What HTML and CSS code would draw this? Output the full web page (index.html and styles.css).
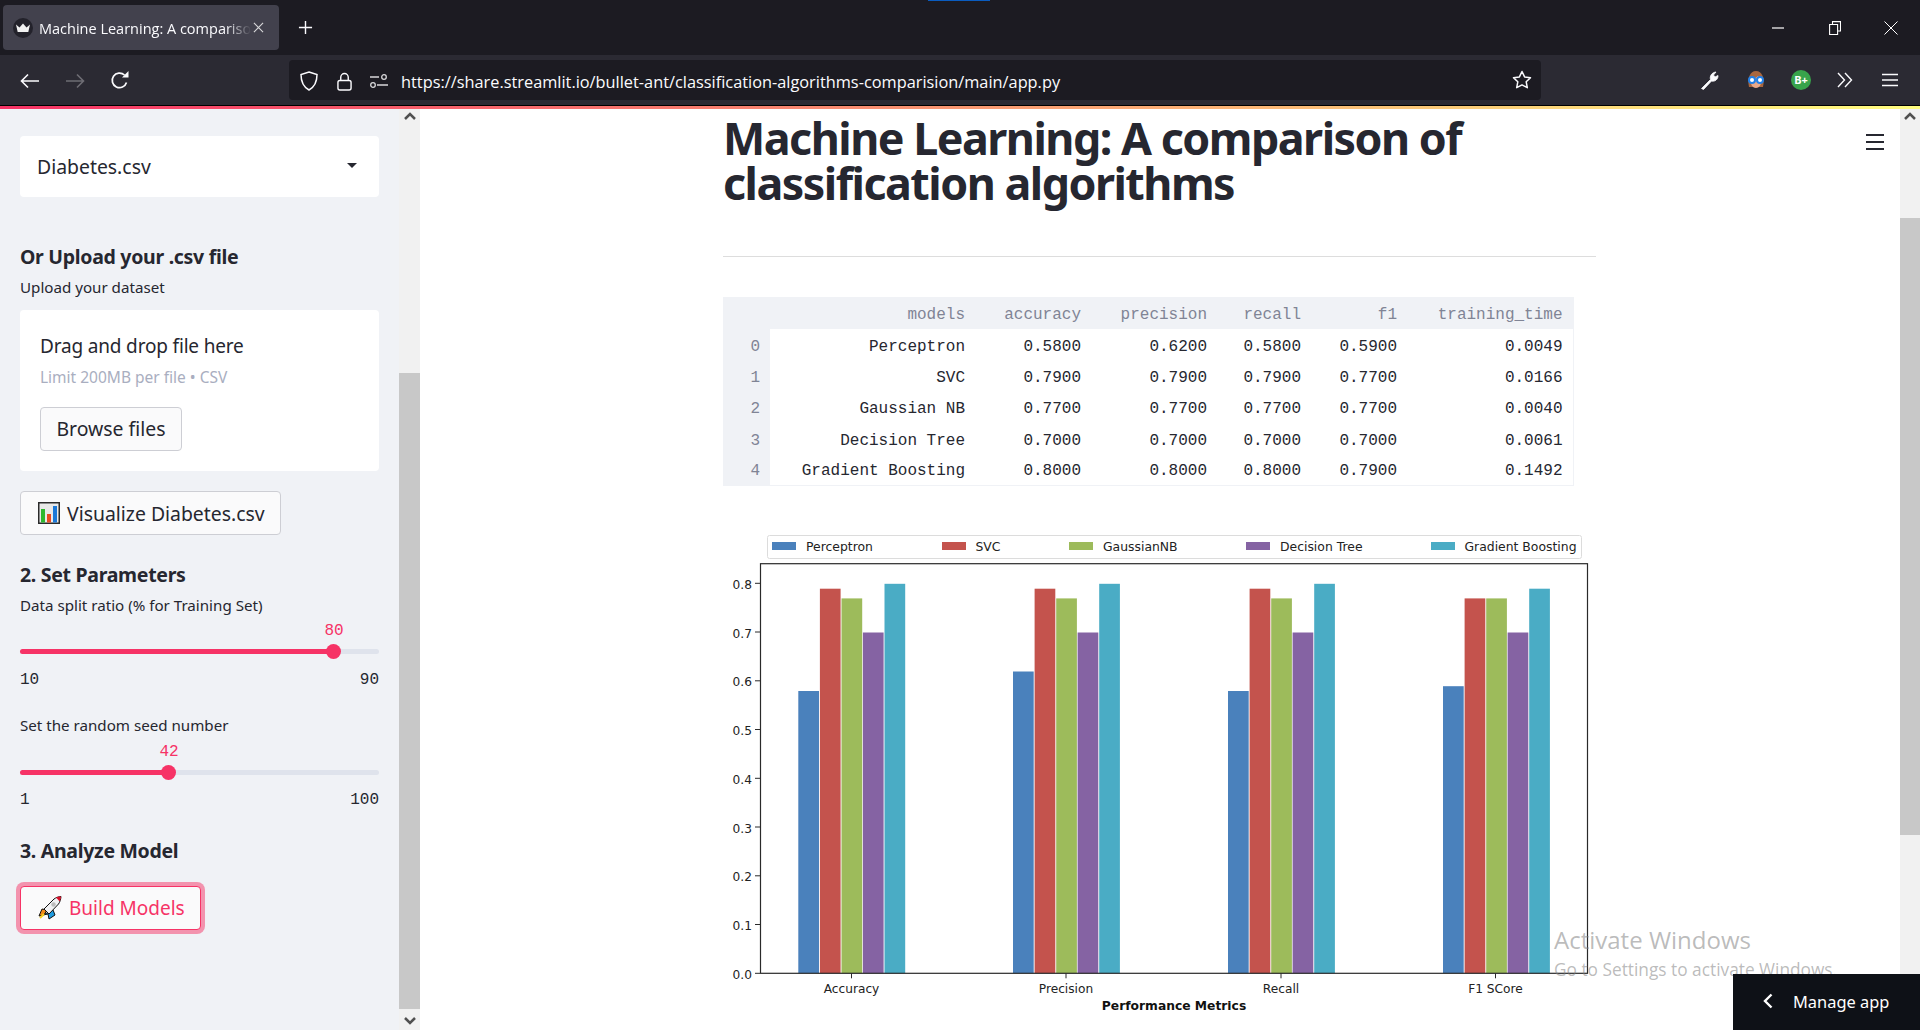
FILE: index.html
```html
<!DOCTYPE html>
<html lang="en">
<head>
<meta charset="utf-8">
<title>Machine Learning: A comparison of classification algorithms</title>
<link rel="stylesheet" href="styles.css">
</head>
<body>
<div class="loadbar"></div>
<header class="tabbar">
  <div class="tab">
    <svg class="favicon" viewBox="0 0 20 20"><circle cx="10" cy="10" r="10" fill="#23222b"/><path d="M3 6.500l3.500 3L10 5.500l3.500 4L17 6.500 15.300 14H4.700z" fill="#f2f2f2"/></svg>
    <span class="tab-title">Machine Learning: A comparison of classification</span>
    <svg class="tab-close" viewBox="0 0 12 12"><path d="M1 1l10 10M11 1L1 11" stroke="#d8d8da" stroke-width="1.200" fill="none"/></svg>
  </div>
  <svg class="newtab" viewBox="0 0 16 16"><path d="M8 1v14M1 8h14" stroke="#fbfbfe" stroke-width="1.500" fill="none"/></svg>
  <div class="winctl">
    <svg class="win-min" viewBox="0 0 12 2"><path d="M0 1h12" stroke="#fff" stroke-width="1.200"/></svg>
    <svg class="win-max" viewBox="0 0 12 14"><path d="M3.500 3V.6h8v9.400H9M.6 3.500h8v10h-8z" stroke="#fff" stroke-width="1.100" fill="none"/></svg>
    <svg class="win-close" viewBox="0 0 14 14"><path d="M.5.5l13 13M13.500.5l-13 13" stroke="#fff" stroke-width="1"/></svg>
  </div>
</header>
<nav class="navbar">
  <svg class="nav-ic nav-back" viewBox="0 0 20 16"><path d="M19 8H2M8 1.500L1.500 8 8 14.500" stroke="#fbfbfe" stroke-width="1.600" fill="none"/></svg>
  <svg class="nav-ic nav-fwd" viewBox="0 0 20 16"><path d="M1 8h17M12 1.500L18.500 8 12 14.500" stroke="#6e6d74" stroke-width="1.600" fill="none"/></svg>
  <svg class="nav-ic nav-reload" viewBox="0 0 20 20"><path d="M16.500 11.500A7.300 7.300 0 1 1 14.500 4" stroke="#fbfbfe" stroke-width="1.700" fill="none"/><path d="M12 6.500h6.500V0z" fill="#fbfbfe"/></svg>
  <div class="urlbar">
    <svg class="url-shield" viewBox="0 0 18 20"><path d="M9 1l8 2.500c0 8-2.500 12.500-8 15.500C3.500 16 1 11.500 1 3.500z" stroke="#fbfbfe" stroke-width="1.500" fill="none"/></svg>
    <svg class="url-lock" viewBox="0 0 16 20"><path d="M4 9V5.500a4 4 0 0 1 8 0V9" stroke="#fbfbfe" stroke-width="1.500" fill="none"/><rect x="1" y="9" width="14" height="10" rx="2" stroke="#fbfbfe" stroke-width="1.500" fill="none"/></svg>
    <svg class="url-tune" viewBox="0 0 18 14"><path d="M0 3h9M7 11h11" stroke="#d8d8da" stroke-width="1.500"/><circle cx="14" cy="3" r="2.300" stroke="#d8d8da" stroke-width="1.300" fill="none"/><circle cx="3" cy="11" r="2.300" stroke="#d8d8da" stroke-width="1.300" fill="none"/></svg>
    <span class="url-text">https://share.streamlit.io/bullet-ant/classification-algorithms-comparision/main/app.py</span>
    <svg class="url-star" viewBox="0 0 20 20"><path d="M10 1.500l2.600 5.400 5.900.8-4.300 4.100 1.100 5.900L10 14.900l-5.300 2.800 1.100-5.900L1.500 7.700l5.900-.8z" stroke="#fbfbfe" stroke-width="1.500" fill="none" stroke-linejoin="round"/></svg>
  </div>
  <div class="tools">
    <svg class="tool-wrench" viewBox="0 0 20 20"><path d="M1.500 18.500L10.500 9.500c-1-3 1-7 5.500-7.500l-2.500 3 1.500 2 3-1.500c.3 4-3.500 6.500-6.500 5.500l-8 8.500z" fill="#fbfbfe" stroke="#fbfbfe" stroke-width=".8" stroke-linejoin="round"/></svg>
    <svg class="tool-avatar" viewBox="0 0 20 20"><path d="M3 17C1 8 4 1 10 1s9 7 7 16z" fill="#a9673f"/><path d="M4.500 10c0 5 2.500 8 5.500 8s5.500-3 5.500-8c-2-1-3-3-3.500-4-2 2-5 3-7.500 4z" fill="#eaa98a"/><circle cx="6" cy="10" r="3" fill="#fff" stroke="#2280e8" stroke-width="2"/><circle cx="14" cy="10" r="3" fill="#fff" stroke="#2280e8" stroke-width="2"/></svg>
    <span class="tool-grade">B+</span>
    <svg class="tool-more" viewBox="0 0 16 16"><path d="M1 1l6.500 7L1 15M8 1l6.500 7L8 15" stroke="#fbfbfe" stroke-width="1.400" fill="none"/></svg>
    <svg class="tool-menu" viewBox="0 0 16 14"><path d="M0 1.500h16M0 7h16M0 12.500h16" stroke="#fbfbfe" stroke-width="1.600"/></svg>
  </div>
</nav>
<div class="accent"></div>
<div class="app">
  <aside class="sidebar">
    <div class="select"><span>Diabetes.csv</span><i class="caret"></i></div>
    <h3 class="side-head head-upload">Or Upload your .csv file</h3>
    <p class="side-label label-upload">Upload your dataset</p>
    <div class="uploader">
      <div class="drop-title">Drag and drop file here</div>
      <div class="drop-limit">Limit 200MB per file • CSV</div>
      <button class="btn btn-browse">Browse files</button>
    </div>
    <button class="btn btn-visual">
      <svg class="emoji" viewBox="0 0 22 22"><rect width="22" height="22" fill="#2b2b2b"/><rect x="1.500" y="1.500" width="19" height="19" fill="#e9e9e9"/><rect x="3" y="7" width="4" height="13.500" fill="#2eb82e"/><rect x="9" y="12" width="4" height="8.500" fill="#ea4a22"/><rect x="15" y="4" width="4" height="16.500" fill="#1b78d8"/></svg>
      Visualize Diabetes.csv
    </button>
    <h3 class="side-head head-params">2. Set Parameters</h3>
    <p class="side-label label-split">Data split ratio (% for Training Set)</p>
    <div class="slider slider-split">
      <div class="slider-value">80</div>
      <div class="track"><div class="fill"><i class="thumb"></i></div></div>
      <div class="slider-ends"><span>10</span><span>90</span></div>
    </div>
    <p class="side-label label-seed">Set the random seed number</p>
    <div class="slider slider-seed">
      <div class="slider-value">42</div>
      <div class="track"><div class="fill"><i class="thumb"></i></div></div>
      <div class="slider-ends"><span>1</span><span>100</span></div>
    </div>
    <h3 class="side-head head-model">3. Analyze Model</h3>
    <button class="btn btn-build">
      <svg class="emoji emoji-rocket" viewBox="0 0 24 24"><path d="M1 20l3-7 5 1-3 5z" fill="#f08a1a" stroke="#111" stroke-width="1"/><path d="M5 19l5-1 1 5 6-4-2-5z" fill="#1e9be0" stroke="#111" stroke-width="1"/><path d="M6 13L16 3c2-1.500 5-2.500 7-2.500-.3 3-1 5.500-2.500 7.500L11 18z" fill="#f2f2f4" stroke="#111" stroke-width="1"/><path d="M18 1.500c1.500-.7 3.500-1 5-1-.2 2-.6 3.500-1.300 5z" fill="#d8102a"/><circle cx="15.500" cy="8.500" r="2.200" fill="#bdbdbd"/><path d="M2 22l4-4" stroke="#f8d020" stroke-width="2"/></svg>
      Build Models
    </button>
  </aside>
  <div class="scrollbar scrollbar-side">
    <svg class="sb-arrow" viewBox="0 0 12 8"><path d="M1 7l5-5 5 5" stroke="#505050" stroke-width="2.500" fill="none"/></svg>
    <div class="sb-thumb"></div>
    <svg class="sb-arrow sb-down" viewBox="0 0 12 8"><path d="M1 1l5 5 5-5" stroke="#505050" stroke-width="2.500" fill="none"/></svg>
  </div>
  <main class="main">
    <h1 class="title">Machine Learning: A comparison of classification algorithms</h1>
    <hr class="rule">
    <table class="frame">
      <colgroup><col class="c0"><col class="c1"><col class="c2"><col class="c3"><col class="c4"><col class="c5"><col class="c6"></colgroup>
      <thead><tr class="r-head"><th></th><th>models</th><th>accuracy</th><th>precision</th><th>recall</th><th>f1</th><th>training_time</th></tr></thead>
      <tbody>
        <tr><th>0</th><td>Perceptron</td><td>0.5800</td><td>0.6200</td><td>0.5800</td><td>0.5900</td><td>0.0049</td></tr>
        <tr><th>1</th><td>SVC</td><td>0.7900</td><td>0.7900</td><td>0.7900</td><td>0.7700</td><td>0.0166</td></tr>
        <tr class="r-tall"><th>2</th><td>Gaussian NB</td><td>0.7700</td><td>0.7700</td><td>0.7700</td><td>0.7700</td><td>0.0040</td></tr>
        <tr><th>3</th><td>Decision Tree</td><td>0.7000</td><td>0.7000</td><td>0.7000</td><td>0.7000</td><td>0.0061</td></tr>
        <tr><th>4</th><td>Gradient Boosting</td><td>0.8000</td><td>0.8000</td><td>0.8000</td><td>0.7900</td><td>0.1492</td></tr>
      </tbody>
    </table>
    <svg class="chart" viewBox="723 525 873 505">
      <rect class="legend-box" x="767.500" y="535.500" width="814" height="23" rx="2"/>
      <rect class="s1" x="772" y="542" width="24" height="8"/><text class="tick legend-text" x="806" y="550.500">Perceptron</text>
      <rect class="s2" x="942" y="542" width="24" height="8"/><text class="tick legend-text" x="975.500" y="550.500">SVC</text>
      <rect class="s3" x="1069" y="542" width="24" height="8"/><text class="tick legend-text" x="1103" y="550.500">GaussianNB</text>
      <rect class="s4" x="1246" y="542" width="24" height="8"/><text class="tick legend-text" x="1280" y="550.500">Decision Tree</text>
      <rect class="s5" x="1431" y="542" width="24" height="8"/><text class="tick legend-text" x="1464.500" y="550.500">Gradient Boosting</text>

      <g transform="translate(798.300 .5)">
        <rect class="s1" x="0" y="690.500" width="20.700" height="282.300"/>
        <rect class="s2" x="21.600" y="588.200" width="20.700" height="384.600"/>
        <rect class="s3" x="43.200" y="597.900" width="20.700" height="374.900"/>
        <rect class="s4" x="64.600" y="632" width="20.700" height="340.800"/>
        <rect class="s5" x="86.200" y="583.300" width="20.700" height="389.500"/>
      </g>
      <g transform="translate(1013 .5)">
        <rect class="s1" x="0" y="671" width="20.700" height="301.800"/>
        <rect class="s2" x="21.600" y="588.200" width="20.700" height="384.600"/>
        <rect class="s3" x="43.200" y="597.900" width="20.700" height="374.900"/>
        <rect class="s4" x="64.600" y="632" width="20.700" height="340.800"/>
        <rect class="s5" x="86.200" y="583.300" width="20.700" height="389.500"/>
      </g>
      <g transform="translate(1228 .5)">
        <rect class="s1" x="0" y="690.500" width="20.700" height="282.300"/>
        <rect class="s2" x="21.600" y="588.200" width="20.700" height="384.600"/>
        <rect class="s3" x="43.200" y="597.900" width="20.700" height="374.900"/>
        <rect class="s4" x="64.600" y="632" width="20.700" height="340.800"/>
        <rect class="s5" x="86.200" y="583.300" width="20.700" height="389.500"/>
      </g>
      <g transform="translate(1443 .5)">
        <rect class="s1" x="0" y="685.700" width="20.700" height="287.100"/>
        <rect class="s2" x="21.600" y="597.900" width="20.700" height="374.900"/>
        <rect class="s3" x="43.200" y="597.900" width="20.700" height="374.900"/>
        <rect class="s4" x="64.600" y="632" width="20.700" height="340.800"/>
        <rect class="s5" x="86.200" y="588.200" width="20.700" height="384.600"/>
      </g>

      <rect class="axes" x="760.500" y="563.700" width="827" height="409.600"/>
      <path class="ticks" d="M755 973.300h5M755 924.500h5M755 875.800h5M755 827h5M755 778.300h5M755 729.500h5M755 680.800h5M755 632h5M755 583.300h5M851.500 973.300v5M1066 973.300v5M1281 973.300v5M1495.500 973.300v5"/>
      <g class="ylabels">
        <text class="tick" x="752" y="978.500">0.0</text>
        <text class="tick" x="752" y="930">0.1</text>
        <text class="tick" x="752" y="881">0.2</text>
        <text class="tick" x="752" y="832.500">0.3</text>
        <text class="tick" x="752" y="783.500">0.4</text>
        <text class="tick" x="752" y="735">0.5</text>
        <text class="tick" x="752" y="686">0.6</text>
        <text class="tick" x="752" y="637.500">0.7</text>
        <text class="tick" x="752" y="588.500">0.8</text>
      </g>
      <g class="xlabels">
        <text class="tick" x="851.500" y="992.500">Accuracy</text>
        <text class="tick" x="1066" y="992.500">Precision</text>
        <text class="tick" x="1281" y="992.500">Recall</text>
        <text class="tick" x="1495.500" y="992.500">F1 SCore</text>
        <text class="axis-title" x="1174" y="1009.500">Performance Metrics</text>
      </g>
    </svg>
    <svg class="hamburger" viewBox="0 0 18 16"><path d="M0 1h18M0 8h18M0 15h18" stroke="#262730" stroke-width="2"/></svg>
  </main>
  <div class="scrollbar scrollbar-main">
    <svg class="sb-arrow" viewBox="0 0 12 8"><path d="M1 7l5-5 5 5" stroke="#505050" stroke-width="2.500" fill="none"/></svg>
    <div class="sb-thumb"></div>
  </div>
</div>
<div class="watermark">
  <div class="wm-title">Activate Windows</div>
  <div class="wm-sub">Go to Settings to activate Windows.</div>
</div>
<div class="manage">
  <svg class="manage-chev" viewBox="0 0 10 16"><path d="M8.500 1.500L2 8l6.500 6.500" stroke="#fff" stroke-width="2.400" fill="none"/></svg>
  <span>Manage app</span>
</div>
</body>
</html>
```
FILE: styles.css
```css
* { box-sizing: border-box; }
html, body { margin: 0; height: 100%; }
body {
  display: flex;
  flex-direction: column;
  height: 1030px;
  overflow: hidden;
  background: #fff;
  font-family: "Noto Sans", "Open Sans", sans-serif;
  color: #262730;
  position: relative;
}
svg { display: block; flex: none; }
button { font-family: inherit; cursor: pointer; }

/* browser chrome */
.loadbar { position: absolute; top: 0; left: 928px; width: 62px; height: 1px; background: #0a5cc0; }
.tabbar { height: 55px; flex: none; background: #1c1b22; display: flex; align-items: center; padding-left: 3px; }
.tab {
  width: 276px; height: 45px; background: #42414d; border-radius: 4px;
  display: flex; align-items: center; padding: 0 10px; color: #fbfbfe;
}
.favicon { width: 20px; height: 20px; }
.tab-title {
  font-family: "Open Sans", sans-serif; font-size: 14.500px; white-space: nowrap; overflow: hidden;
  width: 212px; margin: 2px 0 0 6px; flex: none;
  -webkit-mask-image: linear-gradient(90deg, #000 88%, transparent 100%);
  mask-image: linear-gradient(90deg, #000 88%, transparent 100%);
}
.tab-close { width: 11px; height: 11px; margin-left: 2px; }
.newtab { width: 15px; height: 15px; margin-left: 19px; }
.winctl { margin-left: auto; display: flex; align-items: center; height: 100%; }
.win-min { width: 12px; height: 2px; margin-right: 45px; }
.win-max { width: 12px; height: 14px; margin-right: 43px; }
.win-close { width: 14px; height: 14px; margin-right: 22px; }

.navbar { height: 50px; flex: none; background: #2b2a33; display: flex; align-items: center; }
.nav-ic { height: 16px; }
.nav-back { width: 20px; margin: 2px 0 0 20px; }
.nav-fwd { width: 20px; margin: 2px 0 0 25px; }
.nav-reload { width: 20px; height: 20px; margin: 2px 0 0 25px; }
.urlbar {
  width: 1252px; height: 40px; margin-left: 159px; background: #1c1b22; border-radius: 4px;
  display: flex; align-items: center; padding-left: 11px; color: #fbfbfe;
}
.url-shield { width: 18px; height: 20px; margin-top: 2px; }
.url-lock { width: 15px; height: 19px; margin: 2px 0 0 19px; }
.url-tune { width: 18px; height: 14px; margin: 2px 0 0 18px; }
.url-text { font-family: "Open Sans", sans-serif; font-size: 16.330px; margin: 4px 0 0 13px; white-space: nowrap; }
.url-star { width: 20px; height: 20px; margin-left: auto; margin-right: 9px; }
.tools { display: flex; align-items: center; margin-left: 159px; }
.tool-wrench { width: 20px; height: 20px; }
.tool-avatar { width: 20px; height: 20px; margin-left: 26px; }
.tool-grade {
  width: 20px; height: 20px; margin-left: 25px; border-radius: 50%; background: #38a44b; color: #fff;
  font: 700 11px/20px "Noto Sans", sans-serif; text-align: center;
}
.tool-more { width: 16px; height: 16px; margin-left: 26px; }
.tool-menu { width: 16px; height: 14px; margin-left: 29px; }

.accent {
  height: 4px; flex: none; border-top: 1px solid #000;
  background: linear-gradient(90deg, #f63366, #fffd80);
}

/* app */
.app { flex: 1; display: flex; min-height: 0; position: relative; }
.sidebar { width: 399px; flex: none; background: #f0f2f6; padding: 27px 20px 0 20px; }
.scrollbar { width: 20px; flex: none; background: #f1f1f1; display: flex; flex-direction: column; align-items: center; }
.scrollbar-side { width: 21px; }
.sb-arrow { width: 12px; height: 8px; margin-top: 3px; margin-bottom: 3px; }
.scrollbar-side .sb-thumb { width: 21px; height: 636px; margin-top: 250px; background: #c8c8c8; }
.scrollbar-main .sb-thumb { width: 20px; height: 617px; margin-top: 95px; background: #c8c8c8; }
.sb-down { margin-top: 8px; }

.select {
  height: 61px; background: #fff; border-radius: 4px; display: flex; align-items: center;
  justify-content: space-between; padding: 0 22px 0 17px; font-size: 19.400px;
}
.caret { width: 0; height: 0; border-left: 5px solid transparent; border-right: 5px solid transparent; border-top: 5px solid #262730; margin-top: -2px; }
.side-head { margin: 0; font-size: 19.500px; line-height: 28px; font-weight: 700; letter-spacing: -.3px; }
.side-label { margin: 0; font-size: 15.150px; line-height: 20px; }
.head-upload { margin-top: 46px; }
.label-upload { margin-top: 6px; }
.uploader { height: 161px; margin-top: 13px; background: #fff; border-radius: 4px; padding: 22px 20px 0; }
.drop-title { font-size: 19px; line-height: 28px; letter-spacing: -.17px; }
.drop-limit { font-size: 15.500px; line-height: 20px; color: #a9aec0; margin-top: 7px; }
.btn {
  display: flex; align-items: center; height: 44px; background: #fafafb; border: 1px solid #cdced4;
  border-radius: 4px; font-size: 19.400px; color: #262730; padding: 0;
}
.btn-browse { width: 142px; margin-top: 20px; justify-content: center; padding-bottom: 1px; }
.btn-visual { width: 261px; margin-top: 20px; padding-left: 17px; }
.emoji { width: 22px; height: 22px; margin-right: 7px; }
.emoji-rocket { width: 24px; height: 24px; }
.head-params { margin-top: 26px; }
.label-split { margin-top: 6px; }
.slider { position: relative; }
.slider-split { margin-top: 6px; }
.slider-seed { margin-top: 7px; }
.slider-value { font-family: "Liberation Mono", monospace; font-size: 16px; line-height: 20px; color: #f63366; text-align: center; width: 30px; }
.slider-split .slider-value { margin-left: 299px; }
.slider-seed .slider-value { margin-left: 134px; }
.track { height: 5px; margin-top: 8px; background: #dfe3ec; border-radius: 3px; }
.fill { height: 5px; background: #f63366; border-radius: 3px; position: relative; }
.slider-split .fill { width: 313px; }
.slider-seed .fill { width: 148px; }
.thumb { position: absolute; right: -8px; top: -5px; width: 15px; height: 15px; border-radius: 50%; background: #f63366; }
.slider-ends { display: flex; justify-content: space-between; font-family: "Liberation Mono", monospace; font-size: 16px; line-height: 20px; margin-top: 16px; }
.slider-seed .slider-ends { margin-top: 15px; }
.label-seed { margin-top: 25px; }
.head-model { margin-top: 27px; }
.btn-build {
  width: 181px; margin-top: 21px; padding-left: 17px; color: #f63366; border-color: #f63366; font-size: 19px;
  box-shadow: 0 0 0 4px rgba(246, 51, 102, .5);
}

/* main */
.main { flex: 1; min-width: 0; position: relative; padding: 0 0 0 303px; overflow: hidden; }
.title { margin: 6px 0 0; width: 873px; font-size: 44.800px; line-height: 45px; font-weight: 700; color: #262730; letter-spacing: -1.500px; }
.rule { margin: 51px 0 0; width: 873px; height: 1px; border: 0; background: #ddd; }
.frame { margin-top: 40px; width: 850px; table-layout: fixed; border-collapse: collapse; font-family: "Liberation Mono", monospace; font-size: 16px; border-bottom: 1px solid #f0f2f6; border-right: 1px solid #f0f2f6; }
.c0 { width: 47px; } .c1 { width: 205px; } .c2 { width: 116px; } .c3 { width: 126px; } .c4 { width: 94px; } .c5 { width: 96px; } .c6 { width: 166px; }
.frame th, .frame td { text-align: right; padding: 4px 10px 0; height: 31px; font-weight: 400; }
.frame th { background: #f0f2f6; color: #808495; }
.frame .r-head th { height: 32px; }
.frame .r-tall th, .frame .r-tall td { height: 32px; }
.chart { margin-top: 39px; width: 873px; height: 505px; }
.legend-box { fill: #fff; stroke: #dcdcdc; }
.s1 { fill: #4a81bc; }
.s2 { fill: #c4534d; }
.s3 { fill: #9dbb5b; }
.s4 { fill: #8563a3; }
.s5 { fill: #4aacc5; }
.axes { fill: none; stroke: #2a2a2a; stroke-width: 1.200; }
.ticks { fill: none; stroke: #2a2a2a; stroke-width: 1; }
.tick { font-family: "DejaVu Sans", sans-serif; font-size: 12.200px; fill: #222; }
.legend-text { font-size: 12.400px; }
.ylabels .tick { text-anchor: end; }
.xlabels .tick { text-anchor: middle; }
.axis-title { font-family: "DejaVu Sans", sans-serif; font-size: 12.300px; font-weight: 700; fill: #111; text-anchor: middle; }
.hamburger { position: absolute; right: 16px; top: 25px; width: 18px; height: 16px; }

/* overlays */
.watermark { position: absolute; left: 1554px; top: 923px; font-family: "Open Sans", sans-serif; color: rgba(130,130,130,.55); white-space: nowrap; }
.wm-title { font-size: 24px; line-height: 34px; }
.wm-sub { font-size: 17.300px; line-height: 22px; margin-top: 2px; }
.manage {
  position: absolute; right: 0; bottom: 0; width: 187px; height: 56px; background: #0e1117; color: #fff;
  display: flex; align-items: center; padding: 0 0 2px 30px; font-size: 16.400px;
}
.manage-chev { width: 10px; height: 16px; margin-right: 20px; }
```
